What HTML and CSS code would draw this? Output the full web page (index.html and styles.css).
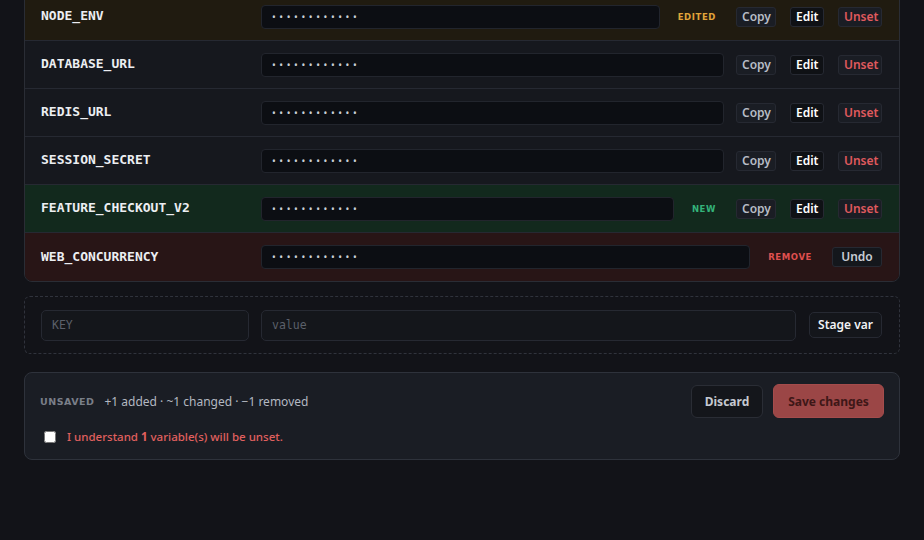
FILE: index.html
```html
<!DOCTYPE html>
<html>
<head>
<meta charset="utf-8">
<link rel="stylesheet" href="styles.css">
</head>
<body>
<div class="page">
  <div class="card">
    <div class="row edited">
      <div class="key">NODE_ENV</div>
      <div class="val">••••••••••••</div>
      <span class="badge b-edited">EDITED</span>
      <button class="btn copy">Copy</button>
      <button class="btn edit">Edit</button>
      <button class="btn unset">Unset</button>
    </div>
    <div class="row">
      <div class="key">DATABASE_URL</div>
      <div class="val">••••••••••••</div>
      <button class="btn copy">Copy</button>
      <button class="btn edit">Edit</button>
      <button class="btn unset">Unset</button>
    </div>
    <div class="row">
      <div class="key">REDIS_URL</div>
      <div class="val">••••••••••••</div>
      <button class="btn copy">Copy</button>
      <button class="btn edit">Edit</button>
      <button class="btn unset">Unset</button>
    </div>
    <div class="row">
      <div class="key">SESSION_SECRET</div>
      <div class="val">••••••••••••</div>
      <button class="btn copy">Copy</button>
      <button class="btn edit">Edit</button>
      <button class="btn unset">Unset</button>
    </div>
    <div class="row new">
      <div class="key">FEATURE_CHECKOUT_V2</div>
      <div class="val">••••••••••••</div>
      <span class="badge b-new">NEW</span>
      <button class="btn copy">Copy</button>
      <button class="btn edit">Edit</button>
      <button class="btn unset">Unset</button>
    </div>
    <div class="row removed">
      <div class="key">WEB_CONCURRENCY</div>
      <div class="val">••••••••••••</div>
      <span class="badge b-remove">REMOVE</span>
      <button class="btn undo">Undo</button>
    </div>
  </div>

  <div class="add">
    <input class="in in-key" placeholder="KEY">
    <input class="in in-val" placeholder="value">
    <button class="btn stage">Stage var</button>
  </div>

  <div class="footer">
    <div class="f-top">
      <span class="unsaved">UNSAVED</span>
      <span class="summary">+1 added · ~1 changed · −1 removed</span>
      <span class="spacer"></span>
      <button class="discard">Discard</button>
      <button class="save">Save changes</button>
    </div>
    <label class="confirm">
      <input type="checkbox" class="cb">
      <span>I understand <b>1</b> variable(s) will be unset.</span>
    </label>
  </div>
</div>
</body>
</html>
```

FILE: styles.css
```css
html, body {
  margin: 0;
  padding: 0;
  background: #121318;
  height: 100%;
  overflow: hidden;
}
body {
  font-family: "Noto Sans", "Liberation Sans", sans-serif;
  color: #d8dbe2;
}
.page {
  padding: 0 24px;
}
.card {
  margin-top: -8px;
  background: #16181e;
  border: 1px solid #2a2d35;
  border-radius: 8px;
  overflow: hidden;
}
.row {
  display: flex;
  align-items: center;
  gap: 14px;
  height: 47px;
  padding: 0 17px 0 16px;
  border-bottom: 1px solid #262932;
}
.row:last-child {
  border-bottom: none;
  height: 48px;
}
.row.edited { background: #201b10; }
.row.new { background: #12291d; }
.row.removed { background: #281516; }
.key {
  width: 206px;
  flex: none;
  font-family: "DejaVu Sans Mono", "Liberation Mono", monospace;
  font-weight: bold;
  font-size: 13px;
  line-height: 16px;
  padding-bottom: 1px;
  color: #eceef2;
}
.val {
  flex: 1;
  height: 22px;
  line-height: 22px;
  margin-right: -2px;
  background: #0c0e13;
  border: 1px solid #22252d;
  border-radius: 4px;
  padding-left: 10px;
  font-size: 10px;
  letter-spacing: 3.6px;
  color: #c9ced6;
}
.badge {
  font-family: "DejaVu Sans", sans-serif;
  font-weight: bold;
  font-size: 8.5px;
  letter-spacing: 0.6px;
  padding: 0 6px;
}
.b-edited { color: #e0a53a; }
.b-new { color: #34b37a; }
.b-remove { color: #e0504f; }
.btn {
  height: 20px;
  padding: 0 5px;
  font-family: "Noto Sans", sans-serif;
  font-size: 12px;
  font-weight: 600;
  border: 1px solid #262932;
  border-radius: 3px;
  background: #1a1d24;
  line-height: 18px;
}
.copy { color: #b7bcc6; width: 40px; }
.edit { color: #ffffff; background: #0f1115; width: 34px; }
.unset { color: #e05a5e; width: 44px; }
.undo { color: #c9cdd5; background: #14171c; width: 50px; }
.add {
  margin-top: 14px;
  display: flex;
  align-items: center;
  gap: 12px;
  height: 56px;
  padding: 0 17px 0 16px;
  border: 1px dashed #30333c;
  border-radius: 6px;
}
.in {
  height: 31px;
  box-sizing: border-box;
  background: #14161b;
  border: 1px solid #262932;
  border-radius: 5px;
  padding: 0 10px;
  font-family: "DejaVu Sans Mono", monospace;
  font-size: 11.5px;
  color: #d8dbe2;
  outline: none;
}
.in::placeholder { color: #5b606a; }
.in-key { width: 208px; flex: none; }
.in-val { flex: 1; }
.stage {
  height: 26px;
  width: 73px;
  margin-left: 1px;
  color: #f0f2f5;
  background: #14161b;
  border-radius: 5px;
  font-size: 12px;
}
.footer {
  margin-top: 18px;
  background: #1a1d24;
  border: 1px solid #2e323b;
  border-radius: 8px;
  padding: 11px 15px 15px 15px;
}
.f-top {
  display: flex;
  align-items: center;
}
.unsaved {
  font-family: "DejaVu Sans", sans-serif;
  font-weight: bold;
  font-size: 9.5px;
  letter-spacing: 0.5px;
  color: #7a7f89;
}
.summary {
  margin-left: 10px;
  font-size: 12px;
  color: #b3b8c1;
}
.spacer { flex: 1; }
.discard {
  height: 33px;
  width: 72px;
  background: #14161b;
  border: 1px solid #2a2d35;
  border-radius: 6px;
  color: #c5c9d1;
  font-family: "Noto Sans", sans-serif;
  font-weight: bold;
  font-size: 12px;
}
.save {
  margin-left: 10px;
  height: 34px;
  width: 111px;
  background: #9b4646;
  border: 1px solid #a44c4c;
  border-radius: 6px;
  color: #3e1717;
  font-family: "Noto Sans", sans-serif;
  font-weight: bold;
  font-size: 12px;
}
.confirm {
  display: flex;
  align-items: center;
  margin-top: 11px;
  font-size: 11.5px;
  font-weight: 500;
  color: #e0605f;
}
.cb {
  width: 12px;
  height: 12px;
  margin: 0 11px 0 4px;
}
.confirm b { font-weight: bold; }
```
